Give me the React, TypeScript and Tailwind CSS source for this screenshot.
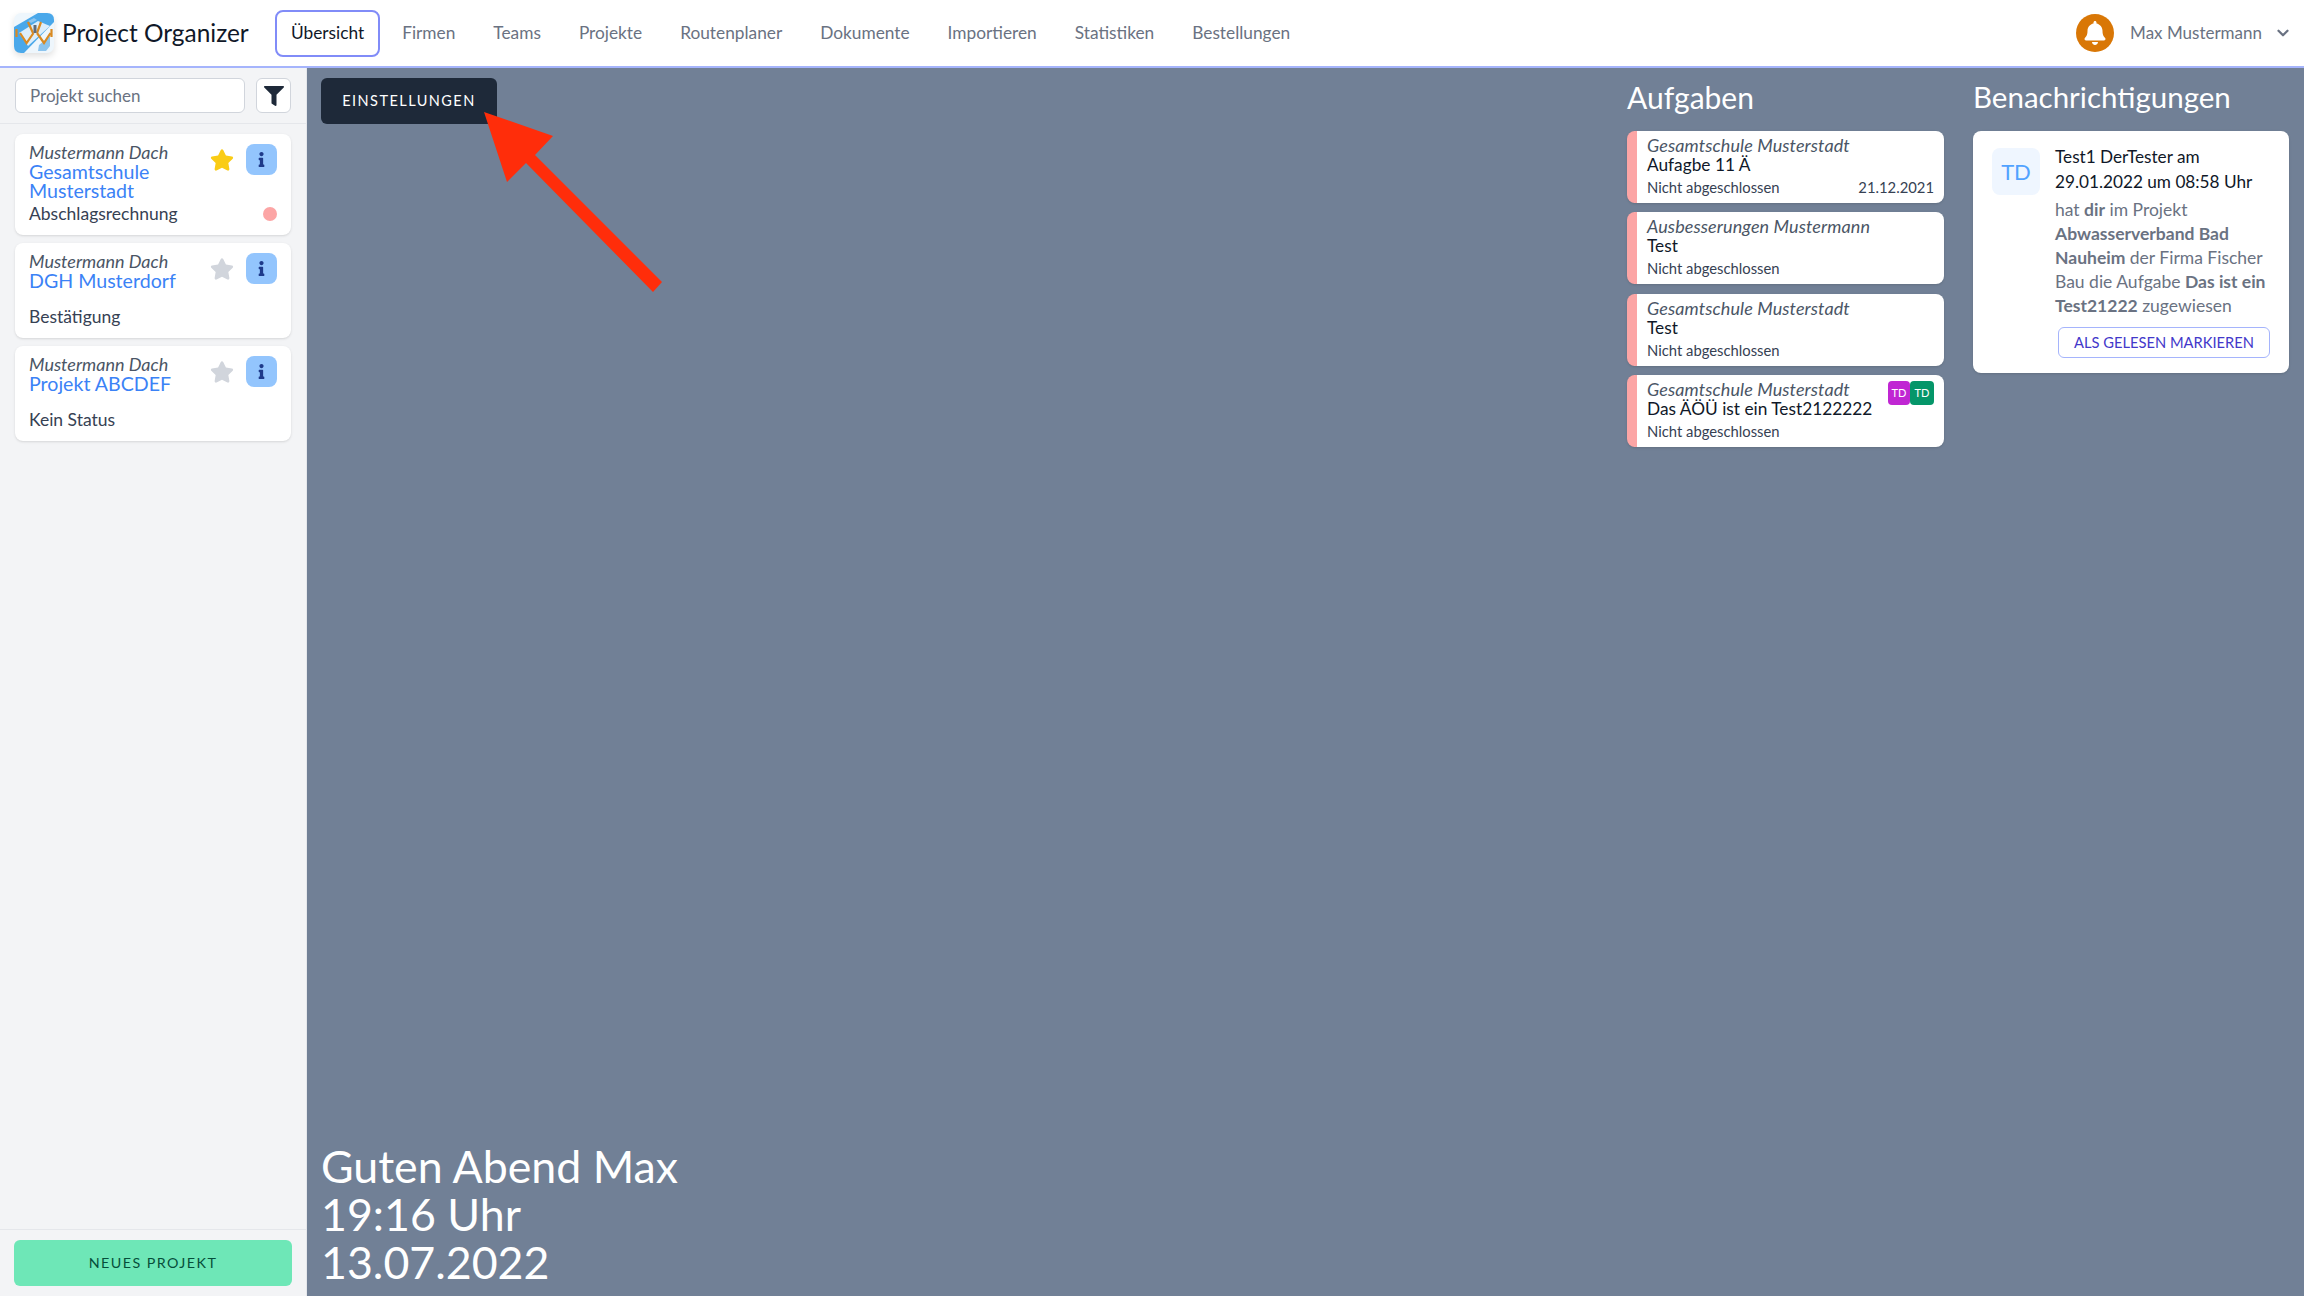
import React from 'react';
import { ChevronDown } from 'lucide-react';
import { FaBell, FaFilter, FaInfo, FaStar } from 'react-icons/fa';

const navItems = ['Firmen', 'Teams', 'Projekte', 'Routenplaner', 'Dokumente', 'Importieren', 'Statistiken', 'Bestellungen'];

const projects = [
  { company: 'Mustermann Dach', name: ['Gesamtschule', 'Musterstadt'], status: 'Abschlagsrechnung', starred: true, dot: true },
  { company: 'Mustermann Dach', name: ['DGH Musterdorf'], status: 'Bestätigung', starred: false, dot: false },
  { company: 'Mustermann Dach', name: ['Projekt ABCDEF'], status: 'Kein Status', starred: false, dot: false },
];

const tasks = [
  { project: 'Gesamtschule Musterstadt', title: 'Aufagbe 11 Ä', date: '21.12.2021', badges: false },
  { project: 'Ausbesserungen Mustermann', title: 'Test', date: '', badges: false },
  { project: 'Gesamtschule Musterstadt', title: 'Test', date: '', badges: false },
  { project: 'Gesamtschule Musterstadt', title: 'Das ÄÖÜ ist ein Test2122222', date: '', badges: true },
];

const Logo = () => (
  <svg width="40" height="40" viewBox="0 0 40 40" className="drop-shadow-md">
    <rect width="40" height="40" rx="7" fill="#eef6fc" />
    <path d="M0 14 L24 0 H33 Q40 0 40 7 V9 L10 40 H7 Q0 40 0 33Z" fill="#4aa8ea" />
    <path d="M5 20 L24 8 L36 13 L14 33Z" fill="#dcedfa" />
    <path d="M25 32l11-9v10l-4 5h-8zM14 8l6-3 3 2-6 3z" fill="#8cc4ee" />
    <path d="M6 20l6.600 10L19.500 20M23 20l7 10 6.500-10M14 9l5 11M27 9l-4 11M2.500 16v8M37.500 16v8" fill="none" stroke="#d98a22" strokeWidth="2.2" />
    <path d="M19.500 12h3v8h-3z" fill="#5f6b7a" />
  </svg>
);

function ProjectCard({ p }: { p: (typeof projects)[number] }) {
  return (
    <div className="rounded-lg bg-white px-[14px] pt-[9px] pb-[10px] shadow">
      <div className="flex items-start justify-between">
        <div className="min-w-0">
          <div className="text-[18px] leading-[19px] italic text-gray-600">{p.company}</div>
          <div className="min-h-[32px] text-[19.600px] leading-[19px] text-[#3b82f6]">
            {p.name.map((n) => (
              <div key={n}>{n}</div>
            ))}
          </div>
        </div>
        <div className="flex items-center gap-[12px] pt-[1px]">
          <FaStar size={24} className={p.starred ? 'text-[#facc15]' : 'text-gray-300'} />
          <div className="flex h-[31px] w-[31px] items-center justify-center rounded-lg bg-[#93c5fd]">
            <FaInfo size={15} className="text-[#1e3a8a]" />
          </div>
        </div>
      </div>
      <div className="mt-[3px] flex items-center justify-between text-[17.500px] leading-[22px] text-gray-700">
        <span>{p.status}</span>
        {p.dot && <span className="h-[14px] w-[14px] rounded-full bg-[#fca5a5]" />}
      </div>
    </div>
  );
}

function TaskCard({ t }: { t: (typeof tasks)[number] }) {
  return (
    <div className="relative h-[72px] rounded-lg border-l-[10px] border-[#fca5a5] bg-white px-[10px] pt-[5px] shadow">
      <div className="text-[18px] leading-[19px] tracking-[0.1px] italic text-gray-600">{t.project}</div>
      <div className="text-[17.300px] leading-[19px] text-gray-900">{t.title}</div>
      <div className="mt-[3px] flex justify-between text-[14.800px] leading-[20px] text-gray-700">
        <span>Nicht abgeschlossen</span>
        <span>{t.date}</span>
      </div>
      {t.badges && (
        <div className="absolute right-[10px] top-[6px] flex">
          <span className="flex h-[24px] w-[22px] items-center justify-center rounded bg-[#c026d3] text-[11px] text-white">TD</span>
          <span className="flex h-[24px] w-[24px] items-center justify-center rounded bg-[#059669] text-[11px] text-white">TD</span>
        </div>
      )}
    </div>
  );
}

export default function App() {
  return (
    <div className="flex h-[1296px] w-[2304px] flex-col overflow-hidden bg-gray-100 font-['Lato',sans-serif]">
      <header className="flex h-[68px] shrink-0 items-center border-b-2 border-[#a5b4fc] bg-white pl-[14px] pr-[12px]">
        <Logo />
        <span className="ml-[8px] w-[213px] text-[24.400px] text-gray-900">Project Organizer</span>
        <nav className="flex items-center gap-[6px]">
          <a className="flex h-[47px] items-center rounded-lg border-2 border-[#818cf8] px-[14px] text-[17.300px] text-gray-900">Übersicht</a>
          {navItems.map((item) => (
            <a key={item} className="px-[16px] text-[17.300px] text-gray-500">
              {item}
            </a>
          ))}
        </nav>
        <div className="ml-auto flex items-center">
          <div className="flex h-[38px] w-[38px] items-center justify-center rounded-full bg-[#d97706]">
            <FaBell size={24} className="text-white" />
          </div>
          <span className="ml-[16px] text-[17px] text-gray-500">Max Mustermann</span>
          <ChevronDown size={18} strokeWidth={3} className="ml-[12px] text-gray-500" />
        </div>
      </header>

      <div className="flex min-h-0 flex-1">
        <aside className="flex w-[307px] shrink-0 flex-col border-r border-gray-200 bg-gray-100">
          <div className="flex h-[56px] shrink-0 items-start gap-[11px] border-b border-gray-200 px-[15px] pt-[10px]">
            <input
              readOnly
              placeholder="Projekt suchen"
              className="h-[35px] w-[230px] rounded-md border border-gray-300 bg-white px-[14px] text-[17px] placeholder:text-gray-500"
            />
            <button className="flex h-[35px] w-[35px] items-center justify-center rounded-md border border-gray-300 bg-white">
              <FaFilter size={20} className="text-gray-800" />
            </button>
          </div>
          <div className="flex flex-1 flex-col gap-[8px] px-[15px] pt-[10px]">
            {projects.map((p) => (
              <ProjectCard key={p.name[0]} p={p} />
            ))}
          </div>
          <div className="shrink-0 border-t border-gray-200 px-[14px] pb-[10px] pt-[10px]">
            <button className="h-[46px] w-full rounded-md bg-[#6ee7b7] text-[14.300px] tracking-widest text-[#064e3b]">NEUES PROJEKT</button>
          </div>
        </aside>

        <main className="relative flex flex-1 bg-[#718096] pl-[14px] pr-[15px] pt-[10px]">
          <div className="flex flex-1 flex-col justify-between">
            <button className="h-[46px] w-[176px] rounded-md bg-gray-800 text-[14.500px] tracking-widest text-white">EINSTELLUNGEN</button>
            <div className="pb-[10px] text-[44.700px] leading-[48px] text-white">
              <div>Guten Abend Max</div>
              <div>19:16 Uhr</div>
              <div>13.07.2022</div>
            </div>
          </div>

          <section className="mr-[29px] w-[317px]">
            <h2 className="mb-[15px] text-[30px] leading-[38px] text-white">Aufgaben</h2>
            <div className="flex flex-col gap-[9.330px]">
              {tasks.map((t, i) => (
                <TaskCard key={i} t={t} />
              ))}
            </div>
          </section>

          <section className="w-[316px]">
            <h2 className="mb-[15px] text-[29.500px] leading-[38px] text-white">Benachrichtigungen</h2>
            <div className="flex h-[242px] gap-[15px] rounded-lg bg-white pl-[19px] pr-[12px] pt-[14px] shadow">
              <div className="mt-[3px] flex h-[47px] w-[48px] shrink-0 items-center justify-center rounded-lg bg-blue-50 text-[22px] text-blue-400">TD</div>
              <div className="min-w-0">
                <div className="pr-[10px] text-[17.200px] leading-[24.500px] text-gray-900">Test1 DerTester am 29.01.2022 um 08:58 Uhr</div>
                <div className="mt-[4px] text-[17.500px] leading-[24px] text-gray-500">
                  hat <b className="font-bold">dir</b> im Projekt <b className="font-bold">Abwasserverband Bad Nauheim</b> der Firma Fischer Bau die Aufgabe <b className="font-bold">Das ist ein Test21222</b> zugewiesen
                </div>
                <button className="ml-[3px] mt-[9px] h-[31px] w-[212px] rounded-md border border-[#a5b4fc] text-[14.700px] text-[#4338ca]">ALS GELESEN MARKIEREN</button>
              </div>
            </div>
          </section>

          <svg className="absolute left-0 top-0" width="400" height="240" viewBox="307 68 400 240">
            <path d="M484 112 L553 136 L535 155 L662 282 L653 292 L526 163 L507 182Z" fill="#ff2d0a" />
          </svg>
        </main>
      </div>
    </div>
  );
}
